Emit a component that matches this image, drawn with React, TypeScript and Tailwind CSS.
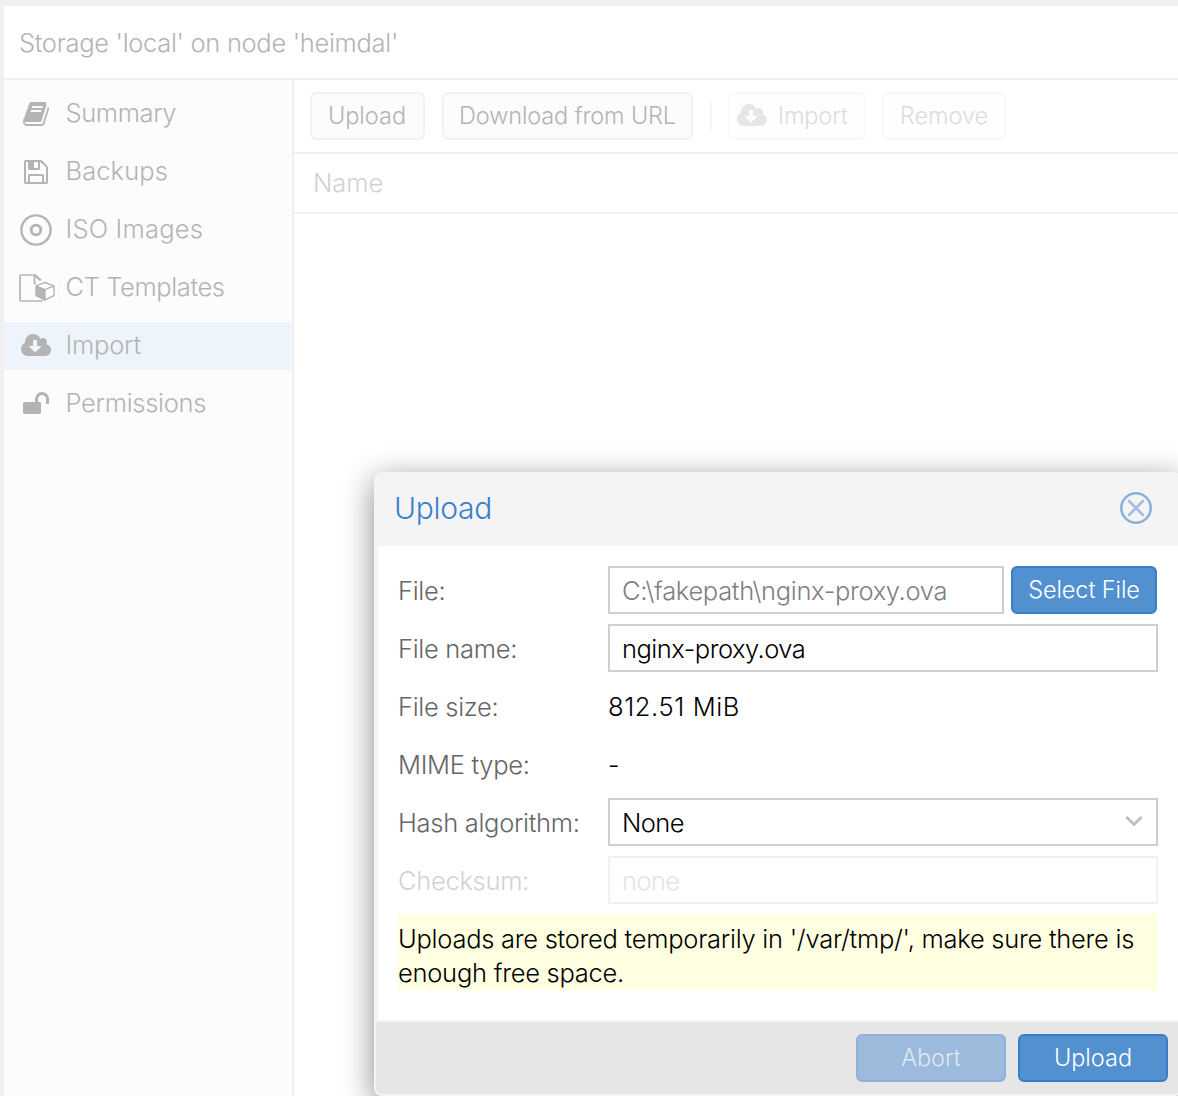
import { useState } from "react";
import type { ReactNode } from "react";

type IconProps = { className?: string };

function BookIcon({ className }: IconProps) {
  return (
    <svg viewBox="0 0 1792 1792" className={className} fill="currentColor">
      <path d="M1703 478q40 57 18 129l-275 906q-19 64-76.500 107.500t-122.500 43.500h-923q-77 0-148.500-53.500t-99.500-131.500q-24-67-2-127 0-4 3-27t4-37q1-8-3-21.500t-3-19.500q2-11 8-21t16.500-23.500 16.500-23.500q23-38 45-91.500t30-91.500q3-10 .5-30t-.5-28q3-11 17-28t17-23q21-36 42-92t25-90q1-9-2.500-32t.5-28q4-13 22-30.500t22-22.500q19-26 42.500-84.500t27.500-96.500q1-8-3-25.500t-2-26.500q2-8 9-18t18-23 17-21q8-12 16.500-30.500t15-35 16-36 19.500-32 26.500-23.500 36-11.500 47.500 5.500l-1 3q38-9 51-9h761q74 0 114 56t18 130l-274 906q-36 119-71.500 153.500t-128.500 34.500h-869q-27 0-38 15-11 16-1 43 24 70 144 70h923q29 0 56-15.500t35-41.500l300-987q7-22 5-57 38 15 59 43zm-1064 2q-4 13 2 22.500t20 9.500h608q13 0 25.500-9.500t16.500-22.500l21-64q4-13-2-22.500t-20-9.500h-608q-13 0-25.500 9.500t-16.500 22.500zm-83 256q-4 13 2 22.500t20 9.500h608q13 0 25.500-9.500t16.500-22.500l21-64q4-13-2-22.500t-20-9.500h-608q-13 0-25.500 9.500t-16.500 22.500z" />
    </svg>
  );
}

function FloppyIcon({ className }: IconProps) {
  return (
    <svg viewBox="0 0 1792 1792" className={className} fill="currentColor">
      <path d="M512 1536h768v-384h-768v384zm896 0h128v-896q0-14-10-38.500t-20-34.500l-281-281q-10-10-34-20t-39-10v416q0 40-28 68t-68 28h-576q-40 0-68-28t-28-68v-416h-128v1280h128v-416q0-40 28-68t68-28h832q40 0 68 28t28 68v416zm-384-928v-320q0-13-9.500-22.500t-22.500-9.500h-192q-13 0-22.500 9.500t-9.500 22.500v320q0 13 9.500 22.500t22.500 9.500h192q13 0 22.500-9.500t9.500-22.500zm640 32v928q0 40-28 68t-68 28h-1344q-40 0-68-28t-28-68v-1344q0-40 28-68t68-28h928q40 0 88 20t76 48l280 280q28 28 48 76t20 88z" />
    </svg>
  );
}

function DiscIcon({ className }: IconProps) {
  return (
    <svg viewBox="0 0 32 32" className={className} fill="none" stroke="currentColor">
      <circle cx="16" cy="16" r="14.6" strokeWidth="2.4" />
      <circle cx="16" cy="16" r="4.8" strokeWidth="2.8" />
    </svg>
  );
}

function TemplateIcon({ className }: IconProps) {
  return (
    <svg viewBox="0 0 38 28" className={className} fill="none" stroke="currentColor">
      <path d="M24 27H2a1 1 0 0 1-1-1V2a1 1 0 0 1 1-1h14l6 5.500" strokeWidth="1.700" />
      <path d="M17 6.500h21v20H25l-8-2z" fill="#fff" stroke="none" />
      <path d="M15.500 1v8.500h1.500M15.500 1l6 5.500" strokeWidth="1.700" />
      <path d="M26 8.500l9 3.400v9.800l-9 4.300-9-4.300v-9.800z" strokeWidth="1.400" strokeLinejoin="round" />
      <path d="M17 11.900l9 3.700V26l-9-4.300z" fill="currentColor" stroke="none" />
      <path d="M17 11.900l9 3.700 9-3.700M26 15.600V26" strokeWidth="1.400" />
    </svg>
  );
}

function CloudIcon({ className }: IconProps) {
  return (
    <svg viewBox="0 0 1920 1792" className={className} fill="currentColor">
      <path d="M1280 928q0-14-9-23t-23-9h-224v-352q0-13-9.500-22.500t-22.500-9.500h-192q-13 0-22.500 9.500t-9.500 22.500v352h-224q-13 0-22.500 9.500t-9.500 22.500q0 14 9 23l352 352q9 9 23 9t23-9l351-351q10-12 10-24zm640 224q0 159-112.500 271.500t-271.500 112.500h-1088q-185 0-316.500-131.500t-131.500-316.500q0-130 70-240t188-165q-2-30-2-43 0-212 150-362t362-150q156 0 285.500 87t188.500 231q71-62 166-62 106 0 181 75t75 181q0 76-41 138 130 31 213.500 135.500t83.500 238.500z" />
    </svg>
  );
}

function UnlockIcon({ className }: IconProps) {
  return (
    <svg viewBox="0 0 1664 1792" className={className} fill="currentColor">
      <path d="M1664 576v256q0 26-19 45t-45 19h-64q-26 0-45-19t-19-45v-256q0-106-75-181t-181-75-181 75-75 181v192h96q40 0 68 28t28 68v576q0 40-28 68t-68 28h-960q-40 0-68-28t-28-68v-576q0-40 28-68t68-28h672v-192q0-185 131.500-316.500t316.500-131.500 316.500 131.500 131.500 316.500z" />
    </svg>
  );
}

const navItems = [
  { label: "Summary", icon: <BookIcon className="h-7 w-7" />, tracking: "tracking-[-0.4px]" },
  { label: "Backups", icon: <FloppyIcon className="h-7 w-7" />, tracking: "tracking-[0.1px]" },
  { label: "ISO Images", icon: <DiscIcon className="h-8 w-8" />, tracking: "tracking-[0.2px]" },
  { label: "CT Templates", icon: <TemplateIcon className="ml-[3px] h-7 w-[38px] shrink-0" />, tracking: "tracking-[-0.4px]" },
  { label: "Import", icon: <CloudIcon className="h-7 w-[30px]" />, tracking: "tracking-[-0.2px]" },
  { label: "Permissions", icon: <UnlockIcon className="h-7 w-[26px]" />, tracking: "tracking-[-0.3px]" },
];

function Sidebar() {
  const [active, setActive] = useState("Import");

  return (
    <nav className="flex w-[290px] shrink-0 flex-col gap-2.5 border-r-2 border-[#f0f0f0] bg-[#fcfcfc] pt-2.5 pr-px text-[#b4b4b4]">
      {navItems.map((item) => (
        <button
          key={item.label}
          onClick={() => setActive(item.label)}
          className={`flex h-12 items-center pl-3.5 text-left ${active === item.label ? "bg-[#edf4fb]" : ""}`}
        >
          <span className="flex w-9 shrink-0 items-center justify-center">{item.icon}</span>
          <span className={`ml-[11.500px] pb-0.5 text-[25.500px] whitespace-nowrap ${item.tracking}`}>{item.label}</span>
        </button>
      ))}
    </nav>
  );
}

function Toolbar() {
  return (
    <div className="flex h-[74px] shrink-0 items-center border-b-2 border-[#f0f0f0] pl-4 text-[23.500px] text-[#b4b4b4]">
      <button className="h-12 w-[115px] rounded-md border-2 border-[#f2f2f2] bg-[#fcfcfc] pr-px">Upload</button>
      <button className="ml-[17px] h-12 w-[251px] rounded-md border-2 border-[#f2f2f2] bg-[#fcfcfc] tracking-[-0.15px] whitespace-nowrap">
        Download from URL
      </button>
      <div className="ml-[17px] h-7 w-0.5 bg-[#f5f5f5]" />
      <button disabled className="ml-4 flex h-12 w-[138px] items-center rounded-md border-2 border-[#f9f9f9] bg-[#fefefe] pl-[6.500px] text-[#dcdcdc]">
        <CloudIcon className="h-7 w-[30px] text-[#e6e6e6]" />
        <span className="ml-[11.500px] tracking-[-0.15px]">Import</span>
      </button>
      <button disabled className="ml-4 h-12 w-[124px] rounded-md border-2 border-[#f9f9f9] bg-[#fefefe] text-[#dcdcdc]">
        Remove
      </button>
    </div>
  );
}

function FormRow({ label, muted, children }: { label: string; muted?: boolean; children: ReactNode }) {
  return (
    <div className="flex h-12 items-center">
      <div className={`w-[210px] shrink-0 pt-0.5 tracking-[-0.3px] whitespace-nowrap ${muted ? "text-[#d2d2d2]" : "text-[#666666]"}`}>
        {label}
      </div>
      {children}
    </div>
  );
}

function UploadDialog() {
  const [fileName, setFileName] = useState("nginx-proxy.ova");

  return (
    <div className="absolute top-[472px] left-[374px] flex h-[624px] w-[808px] flex-col rounded-lg border-2 border-[#f4f4f4] bg-[#f4f4f4] shadow-[0_8px_32px_#888]">
      <div className="flex h-[72px] shrink-0 items-center justify-between pr-7 pb-1 pl-[18px]">
        <h2 className="text-[30px] tracking-[-0.3px] text-[#3b7fcb]">Upload</h2>
        <button aria-label="Close">
          <svg viewBox="0 0 32 32" className="size-8" fill="none">
            <circle cx="16" cy="16" r="14.7" stroke="#8db1d8" strokeWidth="2.600" />
            <path d="M9 9l14 14M23 9L9 23" stroke="#a3bfe3" strokeWidth="2.600" strokeLinecap="round" />
          </svg>
        </button>
      </div>

      <div className="mx-0.5 flex h-[474px] shrink-0 flex-col gap-2.5 bg-white px-5 pt-5 text-[25.500px] text-black">
        <FormRow label="File:">
          <div className="flex h-12 w-[396px] items-center border-2 border-[#cfcfcf] pt-0.5 pl-3 tracking-[-0.32px] text-[#808080]">
            C:\fakepath\nginx-proxy.ova
          </div>
          <button className="ml-[7px] h-12 w-[146px] rounded-md border-2 border-[#3b7ec8] bg-[#5290d0] text-[23.500px] tracking-[-0.1px] whitespace-nowrap text-white">
            Select File
          </button>
        </FormRow>
        <FormRow label="File name:">
          <input
            value={fileName}
            onChange={(e) => setFileName(e.target.value)}
            className="h-12 w-[550px] border-2 border-[#cfcfcf] pl-3 tracking-[-0.5px] outline-none"
          />
        </FormRow>
        <FormRow label="File size:">
          <span className="pt-0.5 tracking-[0.6px]">812.51 MiB</span>
        </FormRow>
        <FormRow label="MIME type:">
          <span className="pt-0.5">-</span>
        </FormRow>
        <FormRow label="Hash algorithm:">
          <div className="flex h-12 w-[550px] items-center justify-between border-2 border-[#cfcfcf] pt-0.5 pr-3 pl-3 tracking-[-0.6px]">
            None
            <svg viewBox="0 0 20 12" className="-mt-1 h-3 w-5" fill="none" stroke="#c0c0c0" strokeWidth="3">
              <path d="M2.500 2L10 9.500 17.500 2" />
            </svg>
          </div>
        </FormRow>
        <FormRow label="Checksum:" muted>
          <div className="flex h-12 w-[550px] items-center border-2 border-[#f0f0f0] pt-0.5 pl-3 tracking-[-0.6px] text-[#e4e4e4]">
            none
          </div>
        </FormRow>
        <p className="h-[76px] bg-[#ffffe1] pt-2 leading-[34px] tracking-[-0.26px] whitespace-nowrap">
          Uploads are stored temporarily in '/var/tmp/', make sure there is
          <br />
          enough free space.
        </p>
      </div>

      <div className="mt-0.5 flex h-[72px] items-center justify-end gap-3 rounded-b-md bg-[#e6e6e6] pr-3 text-[23.500px]">
        <button disabled className="h-12 w-[150px] rounded-md border-2 border-[#90b2da] bg-[#9cbadb] text-[#dce8f4]">
          Abort
        </button>
        <button className="h-12 w-[150px] rounded-md border-2 border-[#3b7ec8] bg-[#5290d0] text-white">Upload</button>
      </div>
    </div>
  );
}

function App() {
  return (
    <div className="relative flex h-[1096px] w-[1178px] flex-col overflow-hidden bg-[#f0f0f0] pt-1.5 pl-1 font-['Inter','Liberation_Sans',sans-serif] font-light">
      <header className="flex h-[74px] shrink-0 items-center border-b-2 border-[#f0f0f0] bg-white pt-0.5 pl-[15px] text-[25.500px] tracking-[-0.32px] text-[#b4b4b4]">
        Storage 'local' on node 'heimdal'
      </header>
      <div className="flex min-h-0 flex-1 bg-white">
        <Sidebar />
        <main className="flex min-w-0 flex-1 flex-col">
          <Toolbar />
          <div className="flex h-[60px] shrink-0 items-center border-b-2 border-[#f0f0f0] pl-[19px] text-[25.500px] text-[#d2d2d2]">Name</div>
        </main>
      </div>
      <UploadDialog />
    </div>
  );
}

export default App;
